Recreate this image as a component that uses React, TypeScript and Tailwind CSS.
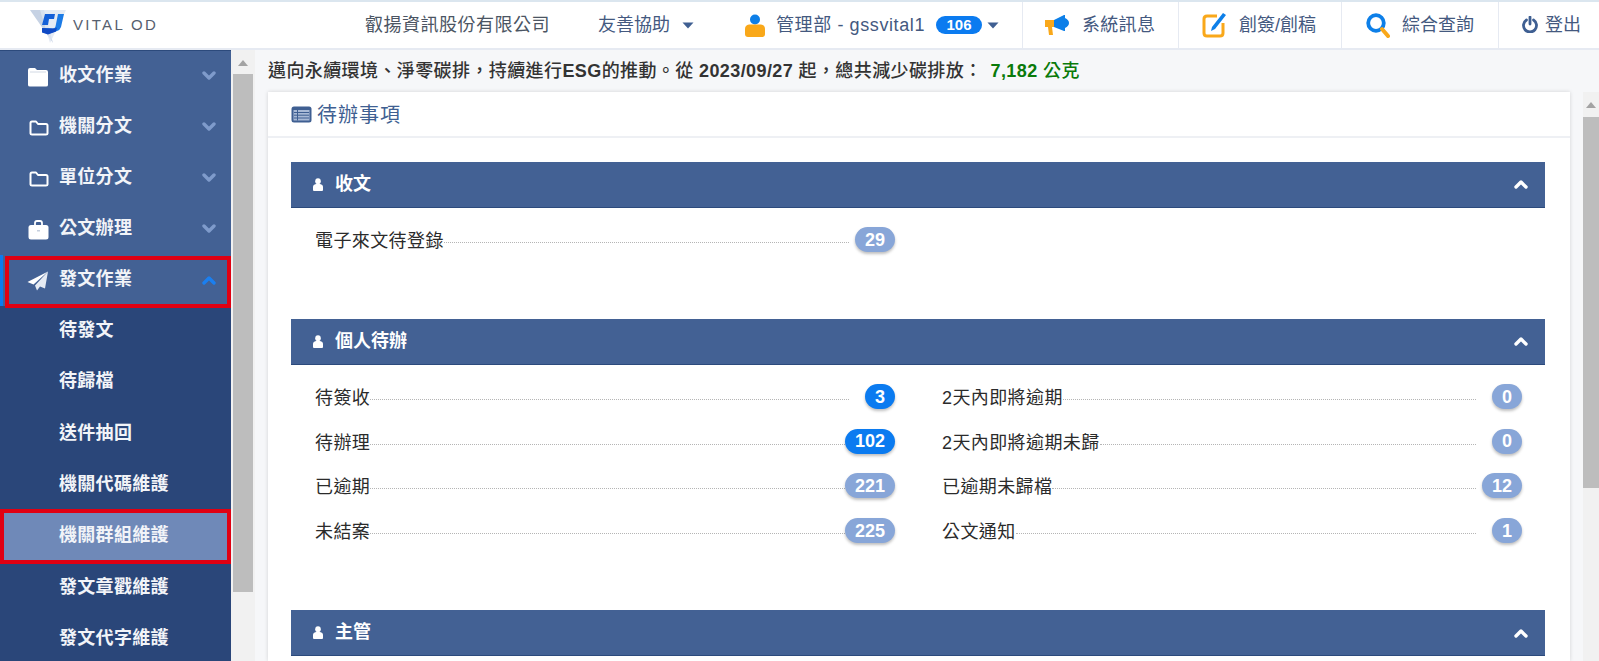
import React from 'react';

const FONT = '"Liberation Sans", "Noto Sans CJK TC", sans-serif';

const Caret = () => (
  <svg width="12" height="7" viewBox="0 0 12 7" className="shrink-0">
    <path d="M0.5 0.5h11L6 6.5z" fill="#3f5f92" />
  </svg>
);

const Chevron = ({ up = false, color = '#7f9bcb', size = 14 }: { up?: boolean; color?: string; size?: number }) => (
  <svg width={size} height={size * 0.72} viewBox="0 0 14 10" className="shrink-0">
    <path
      d={up ? 'M2 8l5-5 5 5' : 'M2 2l5 5 5-5'}
      fill="none"
      stroke={color}
      strokeWidth="3.4"
      strokeLinecap="round"
      strokeLinejoin="round"
    />
  </svg>
);

const Logo = () => (
  <svg width="36" height="34" viewBox="0 0 36 34" className="mt-[3px] shrink-0">
    <path d="M0 0h14l9 33z" fill="#c6d2e4" />
    <path d="M10 0h26L20 33z" fill="#dfe6f1" opacity="0.8" />
    <path d="M15 4h10l-1 5h-5l-1 6h-6z" fill="#1560d8" />
    <path d="M28 4h6l-3 13q-1 3-4 4l-9 3-6-2 1-4 10 .5q2 0 2.500-2z" fill="#1c7be6" />
    <path d="M12 18l11 .5q3 0 4-1l-1 4-8 3-6-2z" fill="#0f49c4" />
  </svg>
);

const FolderFill = () => (
  <svg width="22" height="20" viewBox="0 0 22 20">
    <path d="M1 3q0-2 2-2h5l2 2h9q2 0 2 2v13q0 1.500-2 1.500H3Q1 19.500 1 18z" fill="#fff" />
    <path d="M3 5h16" stroke="#c6cfdd" strokeWidth="0.8" />
  </svg>
);

const FolderLine = () => (
  <svg width="20" height="16" viewBox="0 0 20 16">
    <path d="M1.500 3q0-1.500 1.500-1.500h4l2 2.500h8q1.500 0 1.500 1.500v8q0 1-1.500 1H3q-1.500 0-1.500-1z" fill="none" stroke="#fff" strokeWidth="2" strokeLinejoin="round" />
  </svg>
);

const Briefcase = () => (
  <svg width="21" height="20" viewBox="0 0 21 20">
    <path d="M7 5V3q0-2 2-2h3q2 0 2 2v2" fill="none" stroke="#fff" strokeWidth="1.800" />
    <rect x="0.500" y="5" width="20" height="14.500" rx="2.500" fill="#fff" />
    <rect x="9" y="10" width="3" height="1.500" fill="#c6cfdd" />
  </svg>
);

const Plane = () => (
  <svg width="22" height="20" viewBox="0 0 22 20">
    <path d="M21 0.500L0.500 11l6 2.500z" fill="#fff" />
    <path d="M21 0.500L8 14.500 10 19.500l3-4 5 2z" fill="#e6ebf3" />
  </svg>
);

const Person = () => (
  <svg width="10" height="13" viewBox="0 0 10 13" className="shrink-0">
    <ellipse cx="5" cy="3.200" rx="2.800" ry="3" fill="#fff" />
    <path d="M0 12v-3q0-2.500 3-3h4q3 .5 3 3v3q0 1-1 1H1q-1 0-1-1z" fill="#fff" />
  </svg>
);

const UserIcon = () => (
  <svg width="20" height="23" viewBox="0 0 20 23" className="shrink-0">
    <circle cx="10" cy="5.500" r="5" fill="#0d7fe8" />
    <path d="M0 20v-5q0-4 4-4.500h12q4 .5 4 4.500v5q0 3-3 3H3q-3 0-3-3z" fill="#f9a81a" />
  </svg>
);

const Megaphone = () => (
  <svg width="24" height="21" viewBox="0 0 24 21" className="shrink-0">
    <path d="M0 5h10v7H7l1 8H4l-1-8H0z" fill="#f9a81a" />
    <path d="M9 5l10-5h1v3q4 2 4 5t-4 5v3h-1L9 12z" fill="#0d7fe8" />
  </svg>
);

const EditIcon = () => (
  <svg width="25" height="26" viewBox="0 0 25 26" className="shrink-0">
    <path d="M15 4H5q-3 0-3 3v14q0 3 3 3h13q3 0 3-3v-10" fill="none" stroke="#f9a81a" strokeWidth="3" />
    <path d="M21 1l3 2-11 14-4 2 1-4z" fill="#0d7fe8" />
  </svg>
);

const SearchIcon = () => (
  <svg width="24" height="25" viewBox="0 0 24 25" className="shrink-0">
    <circle cx="10" cy="10" r="7.800" fill="none" stroke="#0d7fe8" strokeWidth="3.800" />
    <path d="M16 16l6 7" stroke="#f9a81a" strokeWidth="4" strokeLinecap="round" />
  </svg>
);

const PowerIcon = () => (
  <svg width="16" height="17" viewBox="0 0 16 17" className="mb-[2px] shrink-0">
    <path d="M4.500 4a6.500 6.500 0 1 0 7 0" fill="none" stroke="#3f5f92" strokeWidth="2.800" strokeLinecap="round" />
    <path d="M8 1v7" stroke="#3f5f92" strokeWidth="2.800" strokeLinecap="round" />
  </svg>
);

const TodoIcon = () => (
  <svg width="21" height="17" viewBox="0 0 21 17" className="shrink-0">
    <rect x="0.500" y="0.500" width="20" height="16" rx="2.500" fill="#3f5f92" />
    <rect x="2.500" y="4" width="16" height="10.500" fill="#a9bad6" />
    <path d="M3 6.500h15M3 9.200h15M3 12h15M6.500 4v10.500" stroke="#3f5f92" strokeWidth="1" />
  </svg>
);

const UpArrow = () => (
  <svg width="10" height="6" viewBox="0 0 10 6">
    <path d="M5 0l5 6H0z" fill="#a3a3a3" />
  </svg>
);

const mainMenu = [
  { label: '收文作業', icon: <FolderFill /> },
  { label: '機關分文', icon: <FolderLine /> },
  { label: '單位分文', icon: <FolderLine /> },
  { label: '公文辦理', icon: <Briefcase /> },
];

const subMenu = ['待發文', '待歸檔', '送件抽回', '機關代碼維護', '機關群組維護', '發文章戳維護', '發文代字維護'];

const personal = [
  { label: '待簽收', count: '3', hot: true },
  { label: '2天內即將逾期', count: '0' },
  { label: '待辦理', count: '102', hot: true },
  { label: '2天內即將逾期未歸', count: '0' },
  { label: '已逾期', count: '221' },
  { label: '已逾期未歸檔', count: '12' },
  { label: '未結案', count: '225' },
  { label: '公文通知', count: '1' },
];

const Row = ({ label, count, hot }: { label: string; count: string; hot?: boolean }) => (
  <div className="relative flex h-[25px] items-center pr-[46px]">
    <span className="pt-[4px] text-[18px] leading-[25px] tracking-[0.4px] text-[#2b2b2b]">{label}</span>
    <div className="mt-[6px] flex-1 border-b border-dotted border-[#b5b5b5]" />
    <span
      className={`absolute right-0 top-0 flex h-[25px] min-w-[29px] items-center justify-center rounded-full px-[10px] text-[18px] font-bold leading-none text-white shadow-[0_2px_3px_rgba(0,0,0,0.25)] ${
        hot ? 'bg-[#0b7bf0]' : 'bg-[#88a6d8]'
      }`}
    >
      {count}
    </span>
  </div>
);

const SectionBar = ({ title }: { title: string }) => (
  <div className="flex h-[46px] items-center justify-between border-b border-[#2c4a7c] bg-[#436194] pl-[22px] pr-[17px]">
    <div className="flex items-center gap-[3px]">
      <Person />
      <span className="ml-[9px] text-[18px] font-bold text-white">{title}</span>
    </div>
    <Chevron up color="#ffffff" />
  </div>
);

export default function App() {
  return (
    <div lang="zh-TW" className="flex h-[661px] w-[1599px] flex-col overflow-hidden bg-[#f6f7f9]" style={{ fontFamily: FONT }}>
      {/* top bar */}
      <header className="flex h-[50px] shrink-0 items-stretch border-b-2 border-t-2 border-b-[#e6eaf2] border-t-[#dbe6ef] bg-white text-[18px] text-[#44597f]">
        <div className="flex w-[365px] items-center pl-[30px]">
          <Logo />
          <span className="ml-[7px] text-[15px] tracking-[2.300px] text-[#56606e]">VITAL OD</span>
        </div>
        <span className="flex w-[233px] items-center tracking-[0.5px] text-[#4b5563]">叡揚資訊股份有限公司</span>
        <div className="flex w-[147px] items-center gap-[12px]">
          友善協助
          <Caret />
        </div>
        <div className="flex w-[277px] items-center">
          <UserIcon />
          <span className="ml-[11px] tracking-[0.6px]">管理部 - gssvital1</span>
          <span className="ml-[11px] flex h-[18px] w-[46px] items-center justify-center rounded-full bg-[#0b7bf0] text-[15px] font-bold text-white">
            106
          </span>
          <span className="ml-[5px]">
            <Caret />
          </span>
        </div>
        <div className="flex w-[156px] items-center gap-[13px] border-l border-[#e6eaf2] pl-[22px] tracking-[0.3px]">
          <Megaphone />
          系統訊息
        </div>
        <div className="flex w-[163px] items-center gap-[12px] border-l border-[#e6eaf2] pl-[23px]">
          <EditIcon />
          創簽/創稿
        </div>
        <div className="flex w-[157px] items-center gap-[12px] border-l border-[#e6eaf2] pl-[24px]">
          <SearchIcon />
          綜合查詢
        </div>
        <div className="flex flex-1 items-center gap-[7px] border-l border-[#e6eaf2] pl-[23px]">
          <PowerIcon />
          登出
        </div>
      </header>

      <div className="flex min-h-0 flex-1">
        {/* side menu */}
        <aside className="relative w-[231px] shrink-0 overflow-hidden border-t border-[#2c4a7c] bg-[#2a4679] font-bold text-[18px] text-[#f2f4f8]">
          {mainMenu.map((m) => (
            <div key={m.label} className="flex h-[51px] items-center bg-[#436194] pr-[15px]">
              <div className="flex w-[59px] justify-end pr-[10px]">{m.icon}</div>
              <span className="flex-1 pb-[3px] tracking-[0.3px]">{m.label}</span>
              <Chevron />
            </div>
          ))}
          <div className="flex h-[51px] items-center border-l-[3px] border-[#0b7bf0] bg-[#436194] pr-[15px]">
            <div className="flex w-[56px] justify-end pr-[10px]">
              <Plane />
            </div>
            <span className="flex-1 pb-[3px] tracking-[0.3px]">發文作業</span>
            <Chevron up color="#1a7ff0" />
          </div>
          {subMenu.map((s) => (
            <div
              key={s}
              className={`flex h-[51.300px] items-center pb-[2px] pl-[59px] tracking-[0.3px] ${s === '機關群組維護' ? 'bg-[#6f89b8]' : ''}`}
            >
              {s}
            </div>
          ))}
          {/* red annotation boxes */}
          <div className="absolute left-[5px] top-[205px] h-[52px] w-[226px] border-4 border-[#e00012]" />
          <div className="absolute left-0 top-[458px] h-[55px] w-[231px] border-4 border-[#e00012]" />
        </aside>

        {/* left scrollbar */}
        <div className="flex w-[24px] shrink-0 flex-col items-center bg-[#f1f1f1] pr-[1px] pt-[10px]">
          <UpArrow />
          <div className="mt-[8px] h-[518px] w-[20px] bg-[#bdbdbd]" />
        </div>

        <main className="flex min-w-0 flex-1 flex-col pl-[13px]">
          <p className="flex h-[42px] shrink-0 items-center text-[18px] font-medium tracking-[0.4px] text-[#333]">
            <span>
              邁向永續環境、淨零碳排，持續進行<b>ESG</b>的推動。從 <b>2023/09/27</b> 起，總共減少碳排放：
            </span>
            <span className="ml-[8px] font-bold text-[#0a7a0a]">
              7,182 <span className="font-medium">公克</span>
            </span>
          </p>

          <div className="flex min-h-0 flex-1">
            <section className="w-[1302px] shrink-0 bg-white shadow-[0_0_4px_rgba(0,0,0,0.15)]">
              <div className="flex h-[46px] items-center gap-[5px] border-b-2 border-[#eef0f4] pl-[23px] pt-[1px] text-[20px] text-[#3f5f92]">
                <TodoIcon />
                <span className="tracking-[1px]">待辦事項</span>
              </div>

              <div className="pl-[23px] pr-[25px] pt-[24px]">
                <SectionBar title="收文" />
                <div className="mb-[67px] mt-[19px] grid grid-cols-2 gap-x-[47px] pl-[24px] pr-[23px]">
                  <Row label="電子來文待登錄" count="29" />
                </div>

                <SectionBar title="個人待辦" />
                <div className="mb-[67px] mt-[19px] grid grid-cols-2 gap-x-[47px] gap-y-[19.700px] pl-[24px] pr-[23px]">
                  {personal.map((p) => (
                    <Row key={p.label} label={p.label} count={p.count} hot={p.hot} />
                  ))}
                </div>

                <SectionBar title="主管" />
              </div>
            </section>

            {/* right scrollbar */}
            <div className="ml-[13px] flex w-[16px] flex-col items-center bg-[#f1f1f1] pt-[10px]">
              <UpArrow />
              <div className="mt-[9px] h-[371px] w-full bg-[#bdbdbd]" />
            </div>
          </div>
        </main>
      </div>
    </div>
  );
}
